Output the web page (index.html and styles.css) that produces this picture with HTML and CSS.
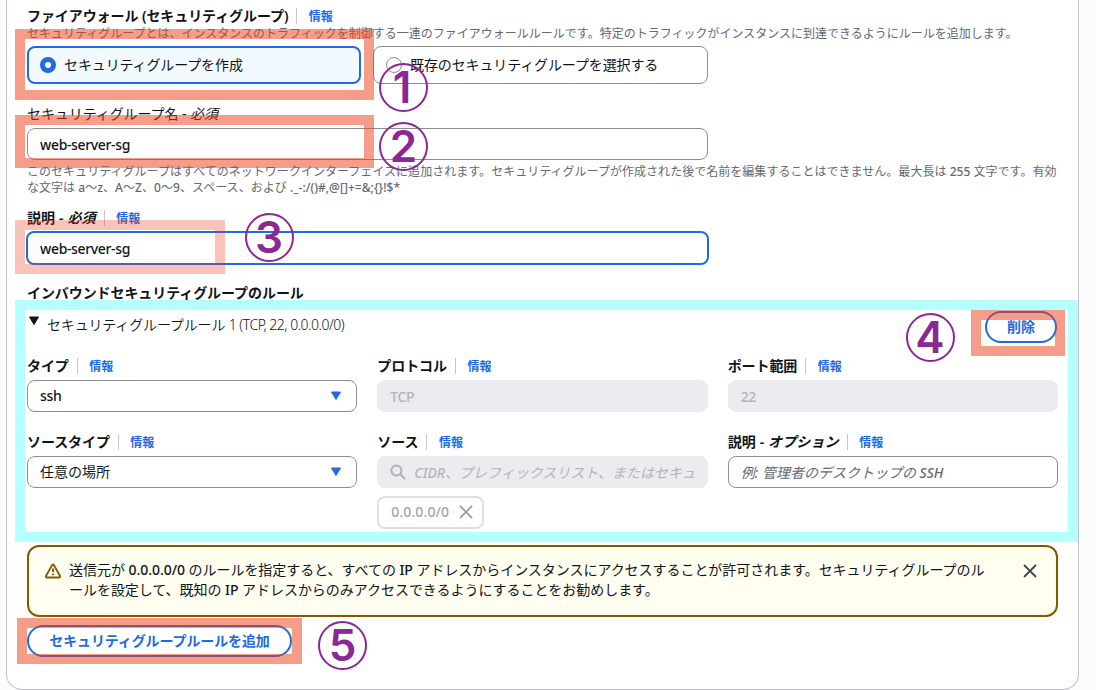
FILE: index.html
```html
<!DOCTYPE html>
<html lang="ja">
<head>
<meta charset="utf-8">
<title>ファイアウォール</title>
<link rel="stylesheet" href="styles.css">
</head>
<body>
<main class="card">
  <div class="label head">ファイアウォール (セキュリティグループ)<a class="info">情報</a></div>
  <p class="hint">セキュリティグループとは、インスタンスのトラフィックを制御する一連のファイアウォールルールです。特定のトラフィックがインスタンスに到達できるようにルールを追加します。</p>
  <div class="tiles">
    <div class="tile selected"><i class="radio"></i><span>セキュリティグループを作成</span></div>
    <div class="tile"><i class="radio"></i><span>既存のセキュリティグループを選択する</span></div>
  </div>
  <div class="label plain name-label"><span>セキュリティグループ名 - <em>必須</em></span></div>
  <div class="input wide"><span class="latin">web-server-sg</span></div>
  <p class="hint note">このセキュリティグループはすべてのネットワークインターフェイスに追加されます。セキュリティグループが作成された後で名前を編集することはできません。最大長は <b class="med">255</b> 文字です。有効<br><span class="chars">な文字は <b class="med">a</b>～<b class="med">z</b>、<b class="med">A</b>～<b class="med">Z</b>、<b class="med">0</b>～<b class="med">9</b>、スペース、および <b class="med">._-:/()#,@[]+=&amp;;{}!$*</b></span></p>
  <div class="label desc-label"><span class="optional">説明 - <em>必須</em></span><a class="info">情報</a></div>
  <div class="input wide focus"><span class="latin">web-server-sg</span></div>
  <div class="label rules-label">インバウンドセキュリティグループのルール</div>
  <section class="rule">
    <div class="rule-head">
      <div class="expander"><svg width="12" height="10" viewBox="0 0 12 10"><path d="M1.5 1h9L6 8.5z" fill="#0f141a" stroke="#0f141a" stroke-linejoin="round"/></svg><span>セキュリティグループルール <b class="light">1 (TCP, 22, 0.0.0.0/0)</b></span></div>
      <button class="btn">削除</button>
    </div>
    <div class="grid">
      <div>
        <div class="label">タイプ<a class="info">情報</a></div>
        <div class="input select"><span class="latin">ssh</span><svg width="12" height="10" viewBox="0 0 12 10"><path d="M1.5 1h9L6 8.5z" fill="#1f6be0" stroke="#1f6be0" stroke-linejoin="round"/></svg></div>
      </div>
      <div>
        <div class="label">プロトコル<a class="info">情報</a></div>
        <div class="input disabled"><span class="latin">TCP</span></div>
      </div>
      <div>
        <div class="label">ポート範囲<a class="info">情報</a></div>
        <div class="input disabled"><span class="latin">22</span></div>
      </div>
      <div>
        <div class="label">ソースタイプ<a class="info">情報</a></div>
        <div class="input select"><span>任意の場所</span><svg width="12" height="10" viewBox="0 0 12 10"><path d="M1.5 1h9L6 8.5z" fill="#1f6be0" stroke="#1f6be0" stroke-linejoin="round"/></svg></div>
      </div>
      <div>
        <div class="label">ソース<a class="info">情報</a></div>
        <div class="input disabled search"><svg width="16" height="16" viewBox="0 0 16 16" fill="none" stroke="#b0b0b8" stroke-width="2"><circle cx="6.4" cy="6.4" r="5"/><path d="M10 10 15 15"/></svg><em><b class="med">CIDR</b>、プレフィックスリスト、またはセキュ</em></div>
        <div class="token"><span>0.0.0.0/0</span><svg width="14" height="14" viewBox="0 0 14 14" stroke="#9f9fa8" stroke-width="1.8"><path d="M1 1l12 12M13 1 1 13"/></svg></div>
      </div>
      <div>
        <div class="label"><span class="optional">説明 - <em>オプション</em></span><a class="info">情報</a></div>
        <div class="input placeholder"><em>例: 管理者のデスクトップの <b class="med">SSH</b></em></div>
      </div>
    </div>
  </section>
  <div class="alert">
    <svg class="warn" width="16" height="16" viewBox="0 0 16 16" fill="none" stroke="#855900" stroke-width="1.9" stroke-linejoin="round"><path d="M7.1 2.1 1.1 12.7Q.6 14.4 2 14.5H14Q15.4 14.4 14.9 12.7L8.9 2.1Q8 .9 7.1 2.1z"/><path d="M8 5.5v3.6M8 10.4v1.8"/></svg>
    <p>送信元が <b class="med">0.0.0.0/0</b> のルールを指定すると、すべての <b class="med">IP</b> アドレスからインスタンスにアクセスすることが許可されます。セキュリティグループのル<br>ールを設定して、既知の <b class="med">IP</b> アドレスからのみアクセスできるようにすることをお勧めします。</p>
    <svg class="close" width="14" height="14" viewBox="0 0 14 14" stroke="#424650" stroke-width="1.8"><path d="M1 1l12 12M13 1 1 13"/></svg>
  </div>
  <button class="btn add">セキュリティグループルールを追加</button>
</main>
<div class="mark m1"></div>
<div class="mark m2"></div>
<div class="mark m3"></div>
<div class="mark frame"></div>
<div class="mark m4"></div>
<div class="mark m5"></div>
<div class="num n1">1</div>
<div class="num n2">2</div>
<div class="num n3">3</div>
<div class="num n4">4</div>
<div class="num n5">5</div>
</body>
</html>
```
FILE: styles.css
```css
* { box-sizing: border-box; }
body {
  margin: 0;
  width: 1096px;
  height: 690px;
  overflow: hidden;
  position: relative;
  background: #fcfcfd;
  color: #0f141a;
  font: 14px/20px "Noto Sans", "Noto Sans CJK JP", sans-serif;
}
.card {
  margin-left: 6px;
  width: 1073px;
  height: 690px;
  padding: 6px 20px 0;
  border: 1px solid #c0c0ca;
  border-top: 0;
  border-radius: 0 0 16px 16px;
  background: #fff;
}
p { margin: 0; }
svg { flex-shrink: 0; }
.label {
  display: flex;
  align-items: center;
  height: 20px;
  font-weight: 600;
  letter-spacing: -0.08px;
  white-space: nowrap;
}
.label.plain { font-weight: 400; }
.optional { letter-spacing: 0.12px; }
.info {
  margin-left: 8px;
  padding-left: 11.5px;
  border-left: 1px solid #c6c6cd;
  color: #1f6be0;
  font-size: 12px;
  line-height: 15px;
  padding-top: 1px;
  letter-spacing: 0;
}
.hint {
  color: #656871;
  font-size: 12px;
  line-height: 16px;
  white-space: nowrap;
}
.head + .hint { height: 20px; }
.note { letter-spacing: 0.03px; }
.chars { letter-spacing: 0.04px; }
.med { font-weight: 500; }
.tiles { display: flex; gap: 12px; }
.tile {
  display: flex;
  align-items: center;
  gap: 8px;
  width: 335px;
  height: 38px;
  padding: 0 12px;
  border: 1px solid #8c8c94;
  border-radius: 8px;
  letter-spacing: -0.12px;
}
.tile.selected { width: 334px; padding: 0 11px; border: 2px solid #1f6be0; background: #f2faff; }
.tile span { margin-top: -1px; }
.radio { width: 16px; height: 16px; border: 1px solid #8c8c94; border-radius: 50%; }
.selected .radio { border: 5px solid #1f6be0; background: #fff; }
.name-label { margin-top: 20px; }
.input {
  display: flex;
  align-items: center;
  height: 32px;
  padding: 0 12px;
  border: 1px solid #8c8c94;
  border-radius: 8px;
  background: #fff;
  white-space: nowrap;
  overflow: hidden;
}
.wide { width: 681px; margin-top: 4px; }
.latin { margin-top: 1px; font-weight: 500; letter-spacing: -0.35px; }
.select .latin { margin-top: 0; }
.note { margin-top: 4px; }
.desc-label { margin-top: 12px; }
.focus { width: 683px; height: 34px; margin: 3px 0 0 -1px; border: 2px solid #1f6be0; }
.rules-label { margin-top: 18px; }
.rule-head { display: flex; justify-content: space-between; height: 45px; padding-top: 8px; }
.rule-head .btn { margin-right: 1px; }
.expander { display: flex; gap: 7px; padding-top: 4px; font-weight: 350; letter-spacing: -0.16px; }
.expander svg { margin: 1px 0 0 1px; }
.light { font-weight: 300; letter-spacing: -0.5px; }
.btn {
  height: 32px;
  padding: 0 20px;
  border: 2px solid #1f6be0;
  border-radius: 16px;
  background: #fff;
  color: #1f6be0;
  font: 600 14px/20px "Noto Sans", "Noto Sans CJK JP", sans-serif;
  white-space: nowrap;
}
.grid { display: grid; grid-template-columns: repeat(3, 1fr); column-gap: 20px; row-gap: 20px; margin-top: 8px; }
.grid > div { min-width: 0; height: 56px; }
.grid .input { margin-top: 4px; }
.select { justify-content: space-between; padding-right: 14px; }
.disabled { border-color: #ebebf0; background: #ebebf0; color: #b4b4bb; }
.search { gap: 8px; }
.search em { margin-top: 1px; }
.placeholder { color: #656871; }
.placeholder em { margin-top: 1px; }
.token {
  display: flex;
  align-items: center;
  justify-content: space-between;
  width: 107px;
  height: 33px;
  margin-top: 8px;
  padding: 0 9px 0 12px;
  border: 2px solid #dedee3;
  border-radius: 8px;
  color: #a4a4ad;
  font-weight: 500;
}
.token span { margin-top: -1px; letter-spacing: 0.1px; }
.token svg { margin-top: -2px; }
.alert {
  display: flex;
  height: 72px;
  margin-top: 57px;
  padding: 13px 19px 0 16px;
  border: 2px solid #855900;
  border-radius: 12px;
  background: #fffef0;
}
.alert p { flex: 1; margin-left: 8px; letter-spacing: -0.04px; white-space: nowrap; }
.warn { margin-top: 3px; }
.close { margin-top: 4px; }
.add { width: 265px; margin-top: 8px; padding: 0; letter-spacing: -0.12px; }
.mark { position: absolute; border: 10px solid rgba(237, 59, 21, .5); }
.m1 { left: 15px; top: 29px; width: 359px; height: 71px; }
.m2 { left: 15px; top: 115px; width: 359px; height: 53px; }
.m3 { left: 15px; top: 220px; width: 210px; height: 54px; border-color: rgba(238, 55, 28, .3); }
.m4 { left: 971px; top: 310px; width: 94px; height: 46px; }
.m5 { left: 17px; top: 618px; width: 285px; height: 46px; }
.frame { left: 15px; top: 300px; width: 1063px; height: 242px; border-color: #b5ffff; }
.num {
  position: absolute;
  width: 49px;
  height: 49px;
  border: 2px solid #8b2893;
  border-radius: 50%;
  color: #8b2893;
  font: 600 44px/45px Inter, sans-serif;
  text-align: center;
}
.n1 { left: 379px; top: 63px; text-indent: -3px; }
.n2 { left: 379px; top: 122px; }
.n3 { left: 245px; top: 213px; text-indent: -1px; }
.n4 { left: 906px; top: 313px; text-indent: -1px; }
.n5 { left: 318px; top: 621px; }
```
